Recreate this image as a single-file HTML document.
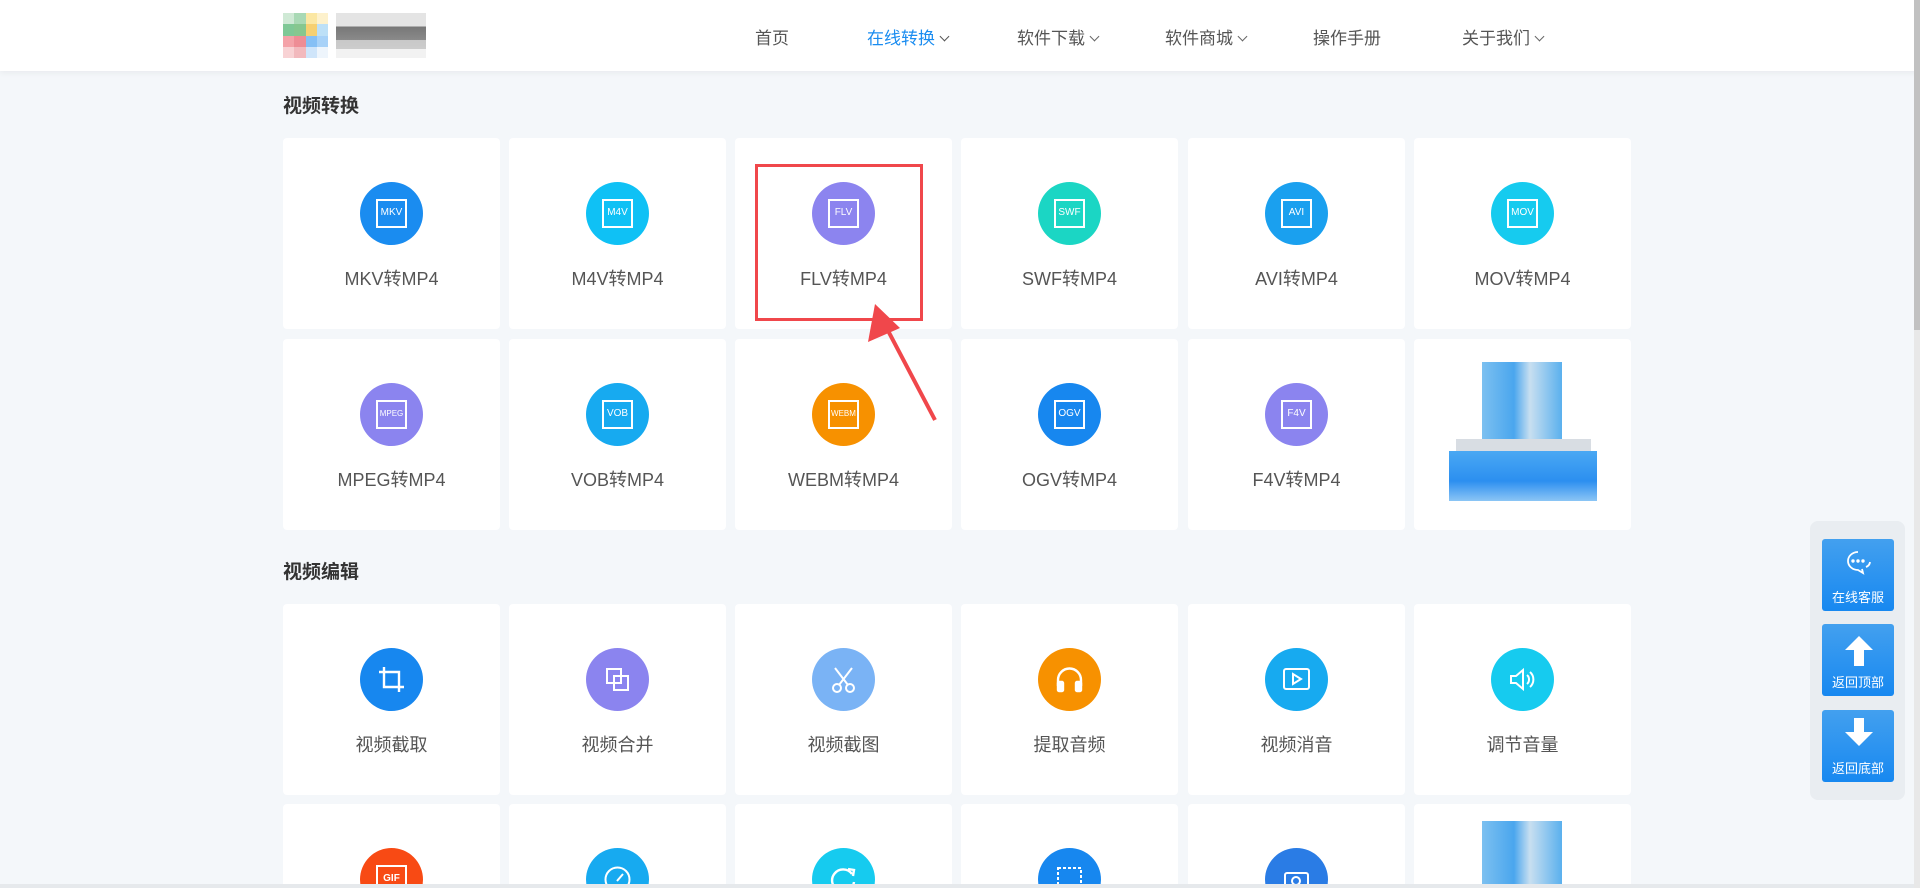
<!DOCTYPE html>
<html style="width:1920px;height:888px;overflow:hidden"><head><meta charset="utf-8"><style>
*{margin:0;padding:0;box-sizing:border-box}
body{width:1920px;height:888px;overflow:hidden;background:#f4f7fa;font-family:"Liberation Sans","Noto Sans CJK SC",sans-serif;position:relative;color:#555}
#w{position:absolute;left:0;top:0;width:1920px;height:888px;overflow:hidden}
.hdr{position:absolute;left:0;top:0;width:1920px;height:71px;background:#fff;box-shadow:0 2px 6px rgba(0,0,0,.05)}
.nav{position:absolute;top:24px;font-size:17px;color:#555}
.nav.a{color:#1a8cf0}
.nav i{display:inline-block;width:7px;height:7px;border-right:1.3px solid #666;border-bottom:1.3px solid #666;transform:rotate(45deg);margin-left:6px;position:relative;top:-4px}
.h2{position:absolute;left:283px;font-size:19px;font-weight:bold;color:#333}
.card{position:absolute;width:217px;height:191px;background:#fff;border-radius:4px;overflow:hidden}
.ic{position:absolute;left:77px;top:44px;width:63px;height:63px;border-radius:50%}
.ic b{position:absolute;left:16px;top:17px;width:31px;height:29px;border:2.5px solid #fff;color:#fff;font-size:10px;font-weight:normal;text-align:center;line-height:24px;font-family:"Liberation Sans",sans-serif}
.ic svg{position:absolute;left:16px;top:16px}
.t{position:absolute;left:0;width:100%;top:127px;text-align:center;font-size:18px;color:#555}
.side{position:absolute;left:1810px;top:521px;width:95px;height:279px;background:#e9edf1;border-radius:8px}
.sb{position:absolute;left:12px;width:72px;height:72px;background:linear-gradient(#43a0ef,#1788f0);border-radius:3px;color:#fff;font-size:13px;text-align:center}
.sb span{position:absolute;left:0;width:100%;top:48px}
</style></head><body><div id="w">
<div class="hdr">
 <div style="position:absolute;left:283px;top:13px;width:45px;height:45px;display:grid;grid-template-columns:repeat(4,1fr)">
  <div style="background:#cfe9d5"></div><div style="background:#a9d9b5"></div><div style="background:#fbe7a3"></div><div style="background:#fdf1cc"></div>
  <div style="background:#7fc896"></div><div style="background:#86c78f"></div><div style="background:#f6d071"></div><div style="background:#bde0f7"></div>
  <div style="background:#f4a2a8"></div><div style="background:#ee8d95"></div><div style="background:#86c0f5"></div><div style="background:#a8d2f8"></div>
  <div style="background:#f8d2d4"></div><div style="background:#f2b9bd"></div><div style="background:#cfe5fa"></div><div style="background:#eef5fc"></div>
 </div>
 <div style="position:absolute;left:336px;top:13px;width:90px;height:45px;background:linear-gradient(#e4e4e4 0,#e4e4e4 30%,#777 30%,#8a8a8a 60%,#c8c8c8 60%,#ccc 80%,#f2f2f2 80%)"></div>
 <div class="nav" style="left:755px">首页</div>
 <div class="nav a" style="left:867px">在线转换<i style="border-color:#555"></i></div>
 <div class="nav" style="left:1017px">软件下载<i></i></div>
 <div class="nav" style="left:1165px">软件商城<i></i></div>
 <div class="nav" style="left:1313px">操作手册</div>
 <div class="nav" style="left:1462px">关于我们<i></i></div>
</div>
<div class="h2" style="top:91px">视频转换</div>
<div class="h2" style="top:557px">视频编辑</div>

<div class="card" style="left:283px;top:138px"><div class="ic" style="background:#1a8cf0"><b>MKV</b></div><div class="t">MKV转MP4</div></div>
<div class="card" style="left:509px;top:138px"><div class="ic" style="background:#0fc1f5"><b>M4V</b></div><div class="t">M4V转MP4</div></div>
<div class="card" style="left:735px;top:138px"><div class="ic" style="background:#8c84ef"><b>FLV</b></div><div class="t">FLV转MP4</div></div>
<div class="card" style="left:961px;top:138px"><div class="ic" style="background:#1bd6c4"><b>SWF</b></div><div class="t">SWF转MP4</div></div>
<div class="card" style="left:1188px;top:138px"><div class="ic" style="background:#1aa0ef"><b>AVI</b></div><div class="t">AVI转MP4</div></div>
<div class="card" style="left:1414px;top:138px"><div class="ic" style="background:#16cbef"><b>MOV</b></div><div class="t">MOV转MP4</div></div>

<div class="card" style="left:283px;top:339px"><div class="ic" style="background:#8b84ef"><b style="font-size:8px">MPEG</b></div><div class="t">MPEG转MP4</div></div>
<div class="card" style="left:509px;top:339px"><div class="ic" style="background:#17aaf0"><b>VOB</b></div><div class="t">VOB转MP4</div></div>
<div class="card" style="left:735px;top:339px"><div class="ic" style="background:#f79100"><b style="font-size:8px">WEBM</b></div><div class="t">WEBM转MP4</div></div>
<div class="card" style="left:961px;top:339px"><div class="ic" style="background:#1787ef"><b>OGV</b></div><div class="t">OGV转MP4</div></div>
<div class="card" style="left:1188px;top:339px"><div class="ic" style="background:#8b84ef"><b>F4V</b></div><div class="t">F4V转MP4</div></div>
<div class="card" style="left:1414px;top:339px">
 <div style="position:absolute;left:68px;top:23px;width:80px;height:82px;background:linear-gradient(90deg,#7cc0f0,#4aa6ee 40%,#c8dff0 60%,#5ab0ee)"></div>
 <div style="position:absolute;left:42px;top:100px;width:135px;height:12px;background:#d8dde3"></div>
 <div style="position:absolute;left:35px;top:112px;width:148px;height:50px;background:linear-gradient(#4aa8f3,#2c8ff0 60%,#8bc5f5)"></div>
</div>

<div class="card" style="left:283px;top:604px"><div class="ic" style="background:#1787ef"><svg width="31" height="31" viewBox="0 0 31 31" fill="none" stroke="#fff" stroke-width="2.4"><path d="M8 3v20h20M3 8h20v20"/></svg></div><div class="t">视频截取</div></div>
<div class="card" style="left:509px;top:604px"><div class="ic" style="background:#8b84ef"><svg width="31" height="31" viewBox="0 0 31 31" fill="none" stroke="#fff" stroke-width="2"><rect x="5" y="5" width="14" height="14"/><rect x="12" y="12" width="14" height="14"/></svg></div><div class="t">视频合并</div></div>
<div class="card" style="left:735px;top:604px"><div class="ic" style="background:#7ab3f5"><svg width="31" height="31" viewBox="0 0 31 31" fill="none" stroke="#fff" stroke-width="2"><circle cx="9" cy="24" r="4"/><circle cx="22" cy="24" r="4"/><path d="M11 21L24 4M20 21L7 4"/></svg></div><div class="t">视频截图</div></div>
<div class="card" style="left:961px;top:604px"><div class="ic" style="background:#f79100"><svg width="31" height="31" viewBox="0 0 31 31" fill="none" stroke="#fff" stroke-width="2.4"><path d="M4 22v-6a11.5 11.5 0 0 1 23 0v6"/><rect x="4" y="18" width="5" height="9" rx="1" fill="#fff"/><rect x="22" y="18" width="5" height="9" rx="1" fill="#fff"/></svg></div><div class="t">提取音频</div></div>
<div class="card" style="left:1188px;top:604px"><div class="ic" style="background:#17aaf0"><svg width="31" height="31" viewBox="0 0 31 31" fill="none" stroke="#fff" stroke-width="2"><rect x="3" y="5" width="25" height="20" rx="2"/><path d="M12 10v10l8-5z"/></svg></div><div class="t">视频消音</div></div>
<div class="card" style="left:1414px;top:604px"><div class="ic" style="background:#16cbef"><svg width="31" height="31" viewBox="0 0 31 31" fill="none" stroke="#fff" stroke-width="2"><path d="M4 12h5l7-6v19l-7-6H4z"/><path d="M20 11a6 6 0 0 1 0 9M23 8a10 10 0 0 1 0 15"/></svg></div><div class="t">调节音量</div></div>

<div class="card" style="left:283px;top:804px;height:84px"><div class="ic" style="background:#f84a14"><b style="font-weight:bold">GIF</b></div></div>
<div class="card" style="left:509px;top:804px;height:84px"><div class="ic" style="background:#17aaf0"><svg width="31" height="31" viewBox="0 0 31 31" fill="none" stroke="#fff" stroke-width="2"><circle cx="15.5" cy="15.5" r="12"/><path d="M15 17l6-7"/></svg></div></div>
<div class="card" style="left:735px;top:804px;height:84px"><div class="ic" style="background:#16cbef"><svg width="31" height="31" viewBox="0 0 31 31" fill="none" stroke="#fff" stroke-width="2.4"><path d="M24 10a11 11 0 1 0 2 8"/><path d="M20 5l6 1-1 6" /></svg></div></div>
<div class="card" style="left:961px;top:804px;height:84px"><div class="ic" style="background:#1787ef"><svg width="31" height="31" viewBox="0 0 31 31" fill="none" stroke="#fff" stroke-width="2" stroke-dasharray="3 2"><rect x="4" y="4" width="23" height="23"/></svg></div></div>
<div class="card" style="left:1188px;top:804px;height:84px"><div class="ic" style="background:#2a7ce5"><svg width="31" height="31" viewBox="0 0 31 31" fill="none" stroke="#fff" stroke-width="2"><rect x="4" y="9" width="23" height="17" rx="2"/><circle cx="15" cy="17" r="4"/></svg></div></div>
<div class="card" style="left:1414px;top:804px;height:84px"><div style="position:absolute;left:68px;top:17px;width:80px;height:70px;background:linear-gradient(90deg,#7cc0f0,#4aa6ee 40%,#c8dff0 60%,#5ab0ee)"></div></div>

<div style="position:absolute;left:755px;top:164px;width:168px;height:157px;border:3px solid #f0474b"></div>
<svg style="position:absolute;left:0;top:0" width="1920" height="888"><path d="M935 420L885 325" stroke="#f0474b" stroke-width="4"/><path d="M875 304L868 342 900 328z" fill="#f0474b"/></svg>

<div class="side">
 <div class="sb" style="top:18px"><svg style="position:absolute;left:23px;top:10px" width="28" height="28" viewBox="0 0 28 28" fill="none" stroke="#fff" stroke-width="1.8"><path d="M13 3a10 9 0 1 0 0 18l5 3-1-4"/><path d="M21 18a7 6 0 0 0 4-5"/><circle cx="8" cy="12" r=".8" fill="#fff"/><circle cx="13" cy="12" r=".8" fill="#fff"/><circle cx="18" cy="12" r=".8" fill="#fff"/></svg><span>在线客服</span></div>
 <div class="sb" style="top:103px"><svg style="position:absolute;left:22px;top:12px" width="30" height="30" viewBox="0 0 30 30"><path d="M15 0L29 14H20V30H10V14H1z" fill="#fff"/></svg><span>返回顶部</span></div>
 <div class="sb" style="top:189px"><svg style="position:absolute;left:22px;top:6px" width="30" height="30" viewBox="0 0 30 30"><path d="M15 30L29 16H20V2H10V16H1z" fill="#fff"/></svg><span>返回底部</span></div>
</div>
<div style="position:absolute;left:0;top:884px;width:1914px;height:4px;background:#e6e9ec"></div>
<div style="position:absolute;left:1914px;top:0;width:6px;height:888px;background:#e8e8e8"></div>
<div style="position:absolute;left:1914px;top:0;width:6px;height:330px;background:#c1c1c1"></div>
</div></body></html>
